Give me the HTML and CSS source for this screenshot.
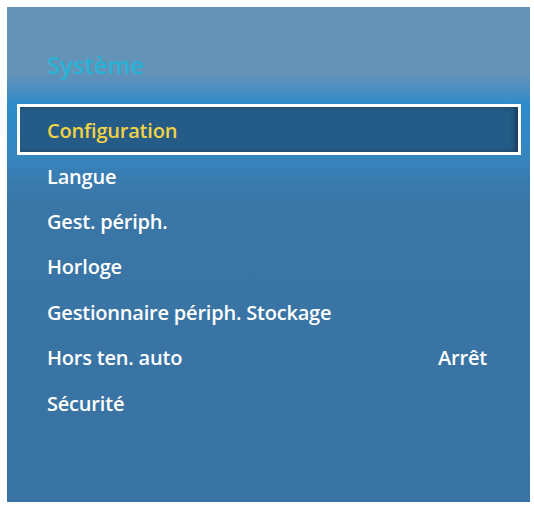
FILE: index.html
```html
<!DOCTYPE html>
<html lang="fr">
<head>
<meta charset="utf-8">
<link rel="stylesheet" href="styles.css">
</head>
<body>
<div class="panel">
  <div class="header"><h1 class="title">Système</h1></div>
  <ul class="menu">
    <li class="item selected"><span>Configuration</span></li>
    <li class="item"><span>Langue</span></li>
    <li class="item"><span>Gest. périph.</span></li>
    <li class="item"><span>Horloge</span></li>
    <li class="item"><span>Gestionnaire périph. Stockage</span></li>
    <li class="item"><span>Hors ten. auto</span><span class="value">Arrêt</span></li>
    <li class="item"><span>Sécurité</span></li>
  </ul>
</div>
</body>
</html>
```

FILE: styles.css
```css
html, body {
  margin: 0;
  padding: 0;
  background: #ffffff;
}
body {
  padding: 7px 4px 5px 7px;
  font-family: "Open Sans", "Noto Sans", sans-serif;
}
.panel {
  width: 523px;
  height: 495px;
  box-sizing: border-box;
  background: linear-gradient(to bottom,
    #6694b9 0px,
    #6592b7 65px,
    #4d8fc2 82px,
    #2f8cca 96px,
    #2d8ac9 104px,
    #3585c0 150px,
    #3a7bae 175px,
    #3975a5 210px,
    #3973a3 100%);
  display: flex;
  flex-direction: column;
  padding: 0 12px 0 13px;
}
.header {
  height: 100px;
  display: flex;
  align-items: center;
  padding-left: 27px;
  padding-top: 14px;
  box-sizing: border-box;
}
.title {
  margin: 0;
  font-size: 24px;
  font-weight: 600;
  color: #27b3d6;
  letter-spacing: -0.1px;
}
.menu {
  list-style: none;
  margin: 0;
  padding: 0;
}
.item {
  height: 45.5px;
  box-sizing: border-box;
  display: flex;
  align-items: center;
  justify-content: space-between;
  padding: 2px 31px 0 27px;
  color: #ffffff;
  font-size: 20px;
  font-weight: 600;
  letter-spacing: -0.2px;
}
.item.selected {
  height: 45px;
  background: #245b87;
  color: #f3d244;
  box-shadow: 0 0 0 3px #ffffff, inset -3px 0 4px rgba(20, 40, 60, 0.6);
}
.item.selected + .item {
  padding-top: 4px;
}
```
